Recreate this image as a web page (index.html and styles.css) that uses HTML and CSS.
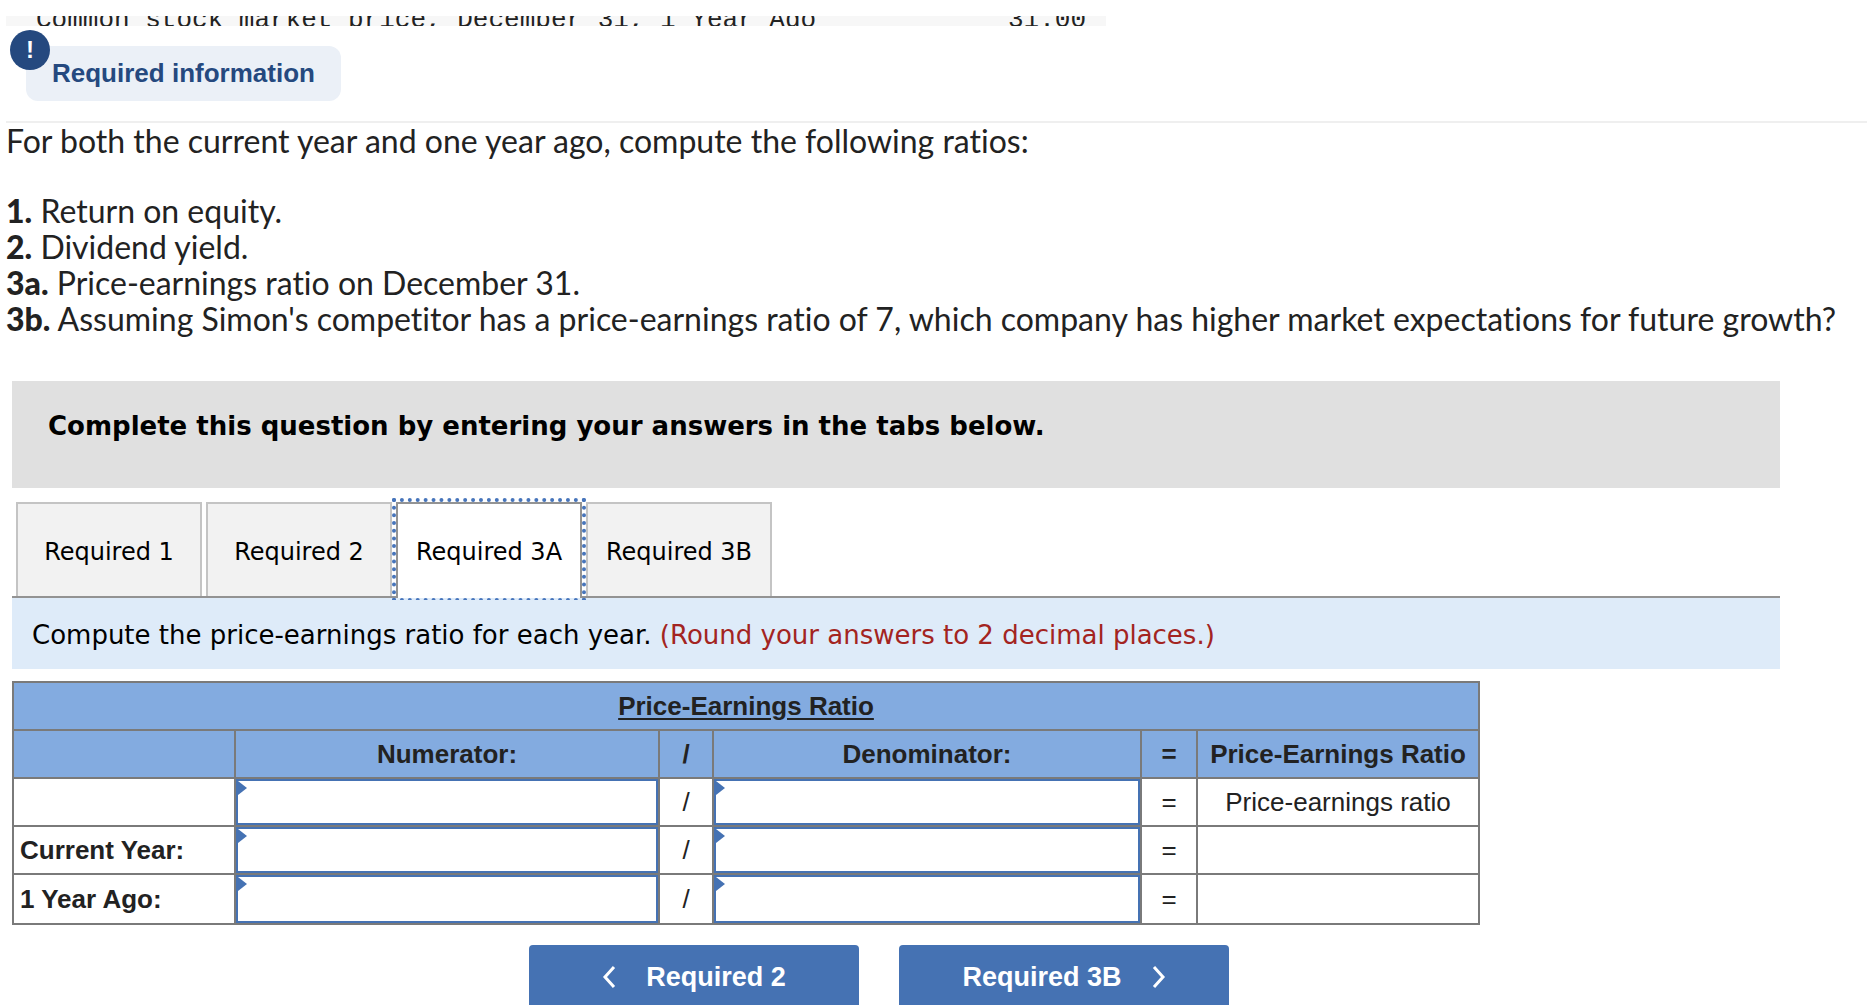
FILE: index.html
```html
<!DOCTYPE html>
<html lang="en">
<head>
<meta charset="utf-8">
<meta name="viewport" content="width=device-width, initial-scale=1">
<title>Required information</title>
<link rel="stylesheet" href="styles.css">
</head>
<body>
<main class="page">
  <div class="data-strip">
    <span>Common stock market price, December 31, 1 Year Ago</span>
    <span>31.00</span>
  </div>

  <header class="info">
    <h1 class="info-label">Required information<span class="info-badge" aria-hidden="true">!</span></h1>
  </header>

  <section class="prompt">
    <p>For both the current year and one year ago, compute the following ratios:</p>
    <ul class="parts">
      <li><b>1.</b> Return on equity.</li>
      <li><b>2.</b> Dividend yield.</li>
      <li><b>3a.</b> Price-earnings ratio on December 31.</li>
      <li><b>3b.</b> Assuming Simon's competitor has a price-earnings ratio of 7, which company has higher market expectations for future growth?</li>
    </ul>
  </section>

  <section class="answer">
    <h2 class="banner">Complete this question by entering your answers in the tabs below.</h2>

    <div class="tabs" role="tablist">
      <button class="tab" type="button" role="tab">Required 1</button>
      <button class="tab" type="button" role="tab">Required 2</button>
      <button class="tab tab-active" type="button" role="tab" aria-selected="true">Required 3A</button>
      <button class="tab" type="button" role="tab">Required 3B</button>
    </div>

    <p class="instruction">Compute the price-earnings ratio for each year. <span class="hint">(Round your answers to 2 decimal places.)</span></p>

    <table class="ratio">
      <colgroup>
        <col class="col-label"><col class="col-num"><col class="col-slash"><col class="col-den"><col class="col-eq"><col class="col-result">
      </colgroup>
      <thead>
        <tr><th colspan="6"><u>Price-Earnings Ratio</u></th></tr>
        <tr><th></th><th>Numerator:</th><th>/</th><th>Denominator:</th><th>=</th><th>Price-Earnings Ratio</th></tr>
      </thead>
      <tbody>
        <tr>
          <th scope="row"></th>
          <td class="entry"><input type="text" aria-label="Numerator name"></td>
          <td>/</td>
          <td class="entry"><input type="text" aria-label="Denominator name"></td>
          <td>=</td>
          <td>Price-earnings ratio</td>
        </tr>
        <tr>
          <th scope="row">Current Year:</th>
          <td class="entry"><input type="text" aria-label="Current year numerator"></td>
          <td>/</td>
          <td class="entry"><input type="text" aria-label="Current year denominator"></td>
          <td>=</td>
          <td></td>
        </tr>
        <tr>
          <th scope="row">1 Year Ago:</th>
          <td class="entry"><input type="text" aria-label="1 year ago numerator"></td>
          <td>/</td>
          <td class="entry"><input type="text" aria-label="1 year ago denominator"></td>
          <td>=</td>
          <td></td>
        </tr>
      </tbody>
    </table>

    <nav class="steps">
      <button class="step" type="button">
        <svg class="chevron" viewBox="0 0 14 22" aria-hidden="true"><path d="M12 1 3 11l9 10"/></svg>
        Required 2
      </button>
      <button class="step" type="button">
        Required 3B
        <svg class="chevron" viewBox="0 0 14 22" aria-hidden="true"><path d="m2 1 9 10-9 10"/></svg>
      </button>
    </nav>
  </section>
</main>
</body>
</html>
```

FILE: styles.css
```css
* {
  box-sizing: border-box;
}

body {
  margin: 0;
  height: 100vh;
  overflow: hidden;
  background: #fff;
  color: #222;
  font-family: "Liberation Sans", Arial, sans-serif;
  font-size: 26px;
}

h1, h2, p, ul {
  margin: 0;
  padding: 0;
}

button {
  font: inherit;
  cursor: pointer;
}

.page {
  padding: 16px 0 0 6px;
}

/* Last visible row of the scrolled data listing */
.data-strip {
  display: flex;
  justify-content: space-between;
  align-items: flex-end;
  max-width: 1100px;
  height: 10px;
  padding: 0 20px 0 30px;
  overflow: hidden;
  background: #f7f7f7;
  font: 26px/12px "Liberation Mono", "Courier New", monospace;
}

.info {
  padding: 20px 0 20px 20px;
  border-bottom: 2px solid #efefef;
}

.info-label {
  position: relative;
  width: max-content;
  padding: 0 26px;
  border-radius: 12px;
  background: #ebf0f7;
  color: #25497f;
  font-size: 26px;
  line-height: 55px;
}

.info-badge {
  position: absolute;
  top: -16px;
  left: -16px;
  width: 40px;
  height: 40px;
  border-radius: 50%;
  background: #25497f;
  color: #fff;
  font-size: 24px;
  line-height: 40px;
  text-align: center;
}

.prompt {
  font-family: Lato, sans-serif;
  font-size: 32px;
  font-variant-ligatures: none;
  line-height: 36px;
}

.parts {
  margin-top: 34px;
  list-style: none;
}

.parts b {
  font-weight: 900;
}

.answer {
  margin: 44px 87px 0 6px;
}

.banner,
.tabs,
.instruction {
  color: #000;
  font-family: "DejaVu Sans", Verdana, sans-serif;
}

.banner {
  padding: 29px 36px 46px;
  background: #e0e0e0;
  font-size: 26px;
  line-height: 32px;
}

/* The clip keeps only the upper half of the focus ring's bottom edge */
.tabs {
  display: flex;
  gap: 4px;
  padding: 14px 4px 0;
  border-bottom: 2px solid #939393;
  font-size: 24px;
  clip-path: inset(0 0 -2px 0);
}

.tab {
  width: 186px;
  height: 94px;
  padding: 4px 0 0;
  border: 2px solid #c4c4c4;
  border-bottom: 0;
  background: #f2f2f2;
  color: #000;
  white-space: nowrap;
}

.tab-active {
  position: relative;
  height: 96px;
  margin-bottom: -2px;
  padding: 2px 0 0;
  border-color: #939393;
  background: #fff;
  outline: 4px dotted #4775bb;
}

.instruction {
  padding: 22px 20px 18px;
  background: #deebf9;
  line-height: 31px;
}

.hint {
  color: #a32421;
}

.ratio {
  width: 100%;
  max-width: 1468px;
  margin-top: 12px;
  border-collapse: collapse;
  table-layout: fixed;
}

.col-label { width: 222px; }
.col-num { width: 424px; }
.col-slash { width: 54px; }
.col-den { width: 428px; }
.col-eq { width: 56px; }
.col-result { width: 282px; }

.ratio th,
.ratio td {
  height: 48px;
  padding: 0 6px;
  border: 2px solid #7a7a7a;
  text-align: center;
  line-height: 30px;
}

.ratio thead th {
  background: #83abe0;
}

.ratio tbody th {
  text-align: left;
}

.ratio u {
  text-underline-offset: 3px;
}

.ratio .entry {
  position: relative;
  padding: 0;
}

.entry input {
  display: block;
  width: 100%;
  height: 46px;
  padding: 0 14px;
  border: 2px solid #4572b3;
  border-radius: 0;
  font: inherit;
}

.ratio tr:last-child .entry input {
  height: 48px;
}

/* Corner flag on every answer cell */
.entry::after {
  content: "";
  position: absolute;
  top: 2px;
  left: 2px;
  width: 9px;
  height: 14px;
  background: #4572b3;
  clip-path: polygon(0 0, 100% 50%, 0 100%);
}

.steps {
  display: flex;
  justify-content: center;
  gap: 40px;
  margin-top: 20px;
  padding-right: 34px;
}

.step {
  display: flex;
  justify-content: center;
  align-items: center;
  gap: 30px;
  width: 330px;
  height: 64px;
  border: 0;
  border-radius: 4px;
  background: #4572b3;
  color: #fff;
  font-size: 27px;
  font-weight: bold;
}

.chevron {
  width: 14px;
  height: 22px;
  fill: none;
  stroke: #fff;
  stroke-width: 3;
}
```
